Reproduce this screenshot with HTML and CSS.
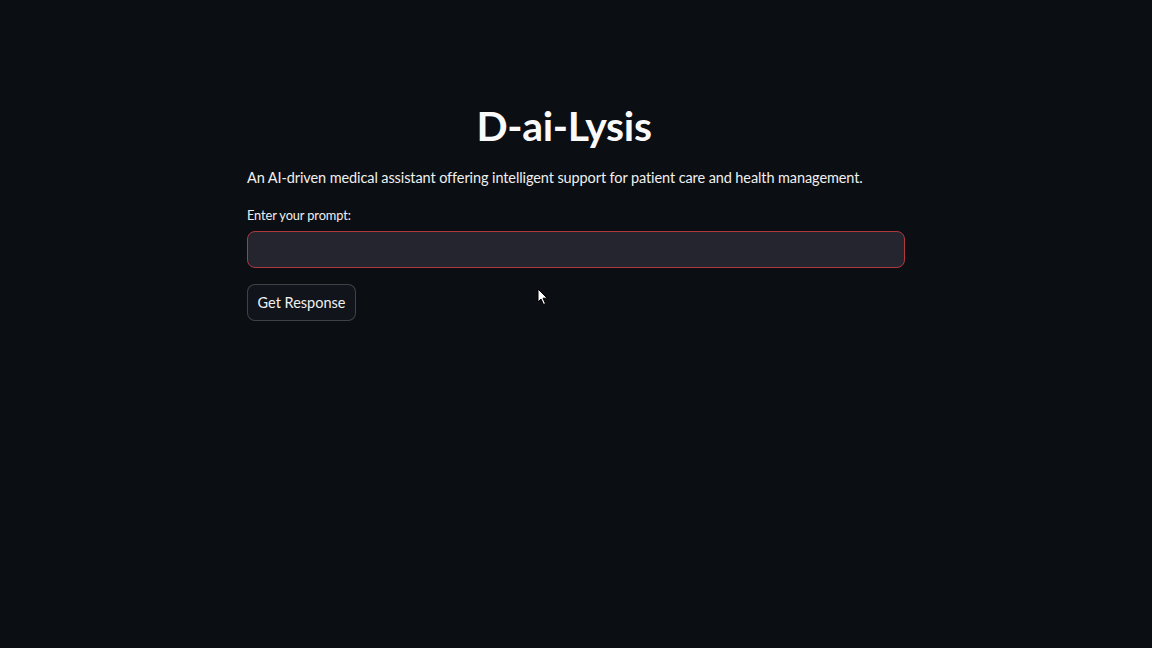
FILE: index.html
```html
<!DOCTYPE html>
<html lang="en">
<head>
<meta charset="utf-8">
<title>D-ai-Lysis</title>
<link rel="stylesheet" href="styles.css">
</head>
<body>
<main class="app">
  <section class="block">
    <h1 class="title">D-ai-Lysis</h1>
    <p class="subtitle">An AI-driven medical assistant offering intelligent support for patient care and health management.</p>
    <label class="label" for="prompt">Enter your prompt:</label>
    <div class="input-wrap"><input id="prompt" class="input" type="text"></div>
    <button class="btn" type="button">Get Response</button>
  </section>
</main>
<svg class="cursor" width="12" height="18" viewBox="0 0 12 18" aria-hidden="true">
  <path d="M1 1 L1 14 L4 11 L6.5 16.5 L8.5 15.6 L6 10.2 L10.2 10.2 Z" fill="#fff" stroke="#000" stroke-width="1"/>
</svg>
</body>
</html>
```

FILE: styles.css
```css
html, body {
  margin: 0;
  padding: 0;
  background: #0b0e13;
  height: 100%;
}
body {
  font-family: Lato, "Noto Sans", sans-serif;
  color: #fafafa;
  overflow: hidden;
}
.app {
  display: flex;
  justify-content: center;
  padding-top: 100px;
}
.block {
  width: 658px;
  display: flex;
  flex-direction: column;
  align-items: flex-start;
}
.title {
  align-self: stretch;
  text-align: center;
  margin: 0 24px 0 0;
  font-size: 41px;
  font-weight: 700;
  line-height: 52px;
  letter-spacing: -0.3px;
}
.subtitle {
  margin: 14px 0 0 0;
  font-size: 14.5px;
  line-height: 24px;
  letter-spacing: -0.1px;
  color: #f0f0f0;
}
.label {
  margin-top: 15px;
  font-size: 12.8px;
  line-height: 20px;
  letter-spacing: -0.1px;
  color: #f0f0f0;
}
.input-wrap {
  align-self: stretch;
  margin-top: 6px;
}
.input {
  box-sizing: border-box;
  width: 100%;
  height: 37px;
  background: #25252f;
  border: 1px solid #b0383f;
  border-radius: 8px;
  outline: none;
  color: #fafafa;
  font: inherit;
  padding: 0 12px;
  display: block;
}
.btn {
  margin-top: 16px;
  box-sizing: border-box;
  height: 37px;
  width: 109px;
  padding: 0;
  background: #11141a;
  border: 1px solid rgba(250, 250, 250, 0.2);
  border-radius: 8px;
  color: #f0f0f0;
  font-family: inherit;
  font-size: 14.5px;
}
.cursor {
  position: absolute;
  left: 537px;
  top: 288px;
}
```
